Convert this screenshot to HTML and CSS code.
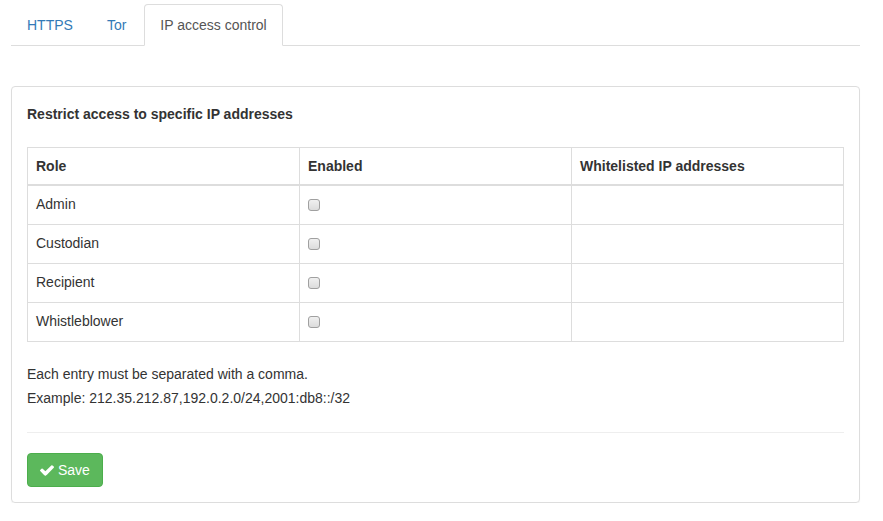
FILE: index.html
```html
<!DOCTYPE html>
<html>
<head>
<meta charset="utf-8">
<link rel="stylesheet" href="styles.css">
</head>
<body>
<div class="page">
  <ul class="tabs">
    <li class="tab"><a href="#">HTTPS</a></li>
    <li class="tab"><a href="#">Tor</a></li>
    <li class="tab active"><a href="#">IP access control</a></li>
  </ul>
  <div class="panel">
    <div class="panel-title">Restrict access to specific IP addresses</div>
    <table class="roles">
      <thead>
        <tr><th>Role</th><th>Enabled</th><th>Whitelisted IP addresses</th></tr>
      </thead>
      <tbody>
        <tr><td>Admin</td><td><input type="checkbox" class="cb"></td><td></td></tr>
        <tr><td>Custodian</td><td><input type="checkbox" class="cb"></td><td></td></tr>
        <tr><td>Recipient</td><td><input type="checkbox" class="cb"></td><td></td></tr>
        <tr><td>Whistleblower</td><td><input type="checkbox" class="cb"></td><td></td></tr>
      </tbody>
    </table>
    <p class="note">Each entry must be separated with a comma.</p>
    <p class="note">Example: 212.35.212.87,192.0.2.0/24,2001:db8::/32</p>
    <hr class="sep">
    <button class="btn-save" type="button"><svg class="check" viewBox="121 334 1550 1188" width="14" height="11"><path fill="#fff" d="M1671 566q0 40-28 68l-724 724-136 136q-28 28-68 28t-68-28l-136-136-362-362q-28-28-28-68t28-68l136-136q28-28 68-28t68 28l294 295 656-657q28-28 68-28t68 28l136 136q28 28 28 68z"/></svg> Save</button>
  </div>
</div>
</body>
</html>
```
FILE: styles.css
```css
* { box-sizing: border-box; }
html, body { margin: 0; background: #fff; }
body {
  font-family: "Liberation Sans", Arial, sans-serif;
  font-size: 14px;
  line-height: 20px;
  color: #333;
}
.page { padding: 4px 23px 0 11px; }
.tabs {
  list-style: none;
  margin: 0;
  padding: 0;
  display: flex;
  border-bottom: 1px solid #ddd;
}
.tab { margin-bottom: -1px; }
.tab a {
  display: block;
  padding: 10px 15px;
  margin-right: 2px;
  border: 1px solid transparent;
  border-radius: 4px 4px 0 0;
  color: #337ab7;
  text-decoration: none;
}
.tab.active a {
  color: #555;
  background: #fff;
  border-color: #ddd #ddd transparent;
}
.panel {
  margin-top: 40px;
  border: 1px solid #ddd;
  border-radius: 4px;
  box-shadow: 0 1px 1px rgba(0,0,0,.05);
  padding: 15px;
}
.panel-title { font-weight: bold; padding-top: 2px; margin-bottom: 23px; }
.roles {
  width: 100%;
  border-collapse: collapse;
  table-layout: fixed;
  border: 1px solid #ddd;
  margin-bottom: 22px;
}
.roles th, .roles td {
  border: 1px solid #ddd;
  padding: 8px;
  text-align: left;
  line-height: 20px;
  vertical-align: top;
}
.roles tbody td { padding: 8px 8px 10px; }
.roles th { font-weight: bold; vertical-align: bottom; }
.roles thead th { border-bottom-width: 2px; }
.cb {
  -webkit-appearance: none;
  appearance: none;
  display: block;
  width: 12px;
  height: 12px;
  margin: 5px 0 0 0;
  border: 1px solid #a0a0a0;
  border-radius: 3px;
  background: linear-gradient(#f0f0f0, #dcdcdc);
}
.note { margin: 0 0 4px; }
.sep {
  border: 0;
  border-top: 1px solid #eee;
  margin: 24px 0 20px;
}
.btn-save {
  display: inline-flex;
  align-items: center;
  gap: 4px;
  font-family: inherit;
  font-size: 14px;
  line-height: 20px;
  padding: 6px 12px;
  color: #fff;
  background: #5cb85c;
  border: 1px solid #4cae4c;
  border-radius: 4px;
}
.check { display: block; }
```
